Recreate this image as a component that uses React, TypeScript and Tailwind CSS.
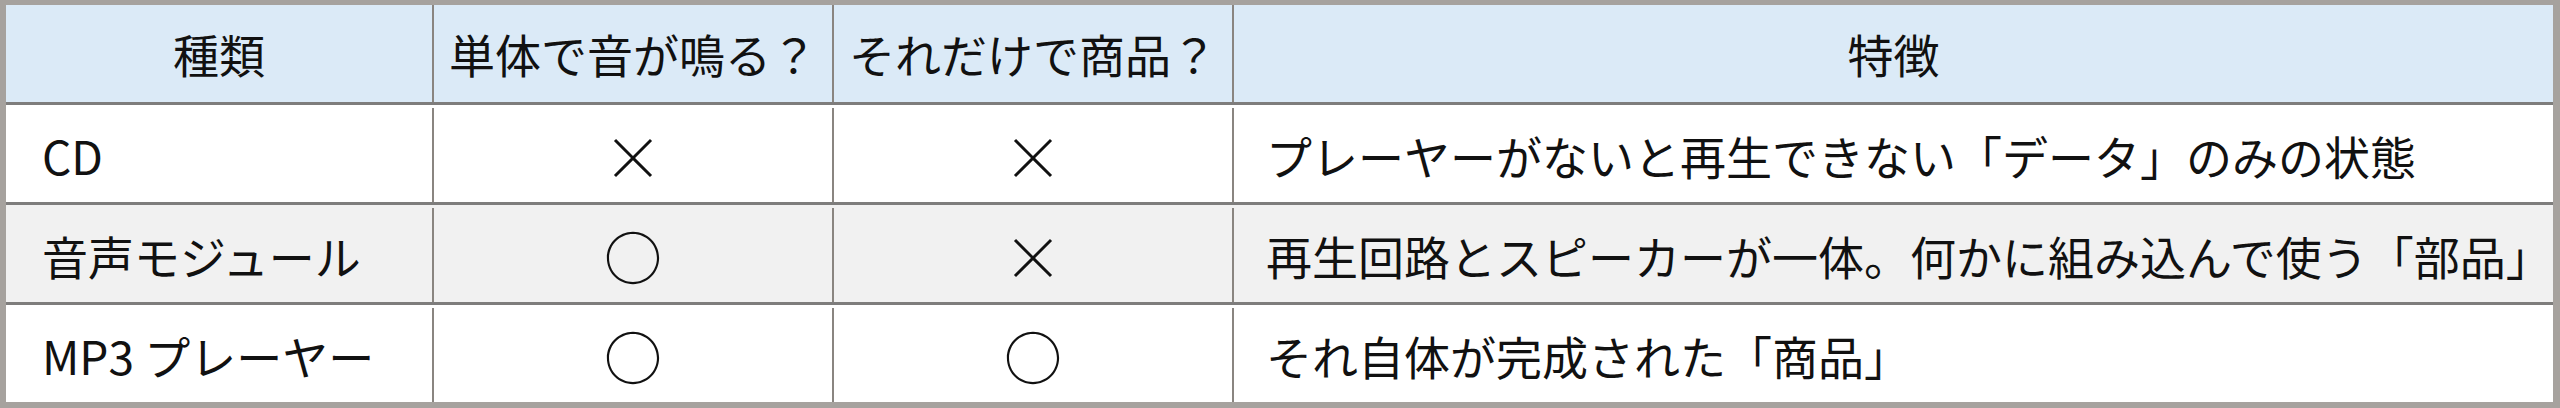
import React from "react";

type Row = {
  name: string;
  sound: string;
  product: string;
  note: string;
  shaded?: boolean;
};

const rows: Row[] = [
  { name: "CD", sound: "×", product: "×", note: "プレーヤーがないと再生できない「データ」のみの状態" },
  {
    name: "音声モジュール",
    sound: "○",
    product: "×",
    note: "再生回路とスピーカーが一体。何かに組み込んで使う「部品」",
    shaded: true,
  },
  { name: "MP3 プレーヤー", sound: "○", product: "○", note: "それ自体が完成された「商品」" },
];

const Mark = ({ value }: { value: string }) => (
  <span className={value === "○" ? "text-[58px] leading-none" : "text-[60px] leading-none font-light"}>{value}</span>
);

export default function App() {
  return (
    <div
      className="w-[2560px] h-[408px] bg-[#a6a29e] pt-[5px] pb-[6px] pl-[6px] pr-[7px] text-[#111] text-[46px]"
      style={{ fontFamily: '"Noto Sans CJK JP", "Noto Sans", sans-serif' }}
    >
      {/* Header */}
      <div className="flex h-[97px] bg-[#dbeaf7]">
        <div className="w-[426px] flex items-center justify-center">種類</div>
        <div className="w-[400px] border-l-2 border-[#8a8580] flex items-center justify-center">単体で音が鳴る？</div>
        <div className="w-[400px] border-l-2 border-[#8a8580] flex items-center justify-center">それだけで商品？</div>
        <div className="flex-1 border-l-2 border-[#8a8580] flex items-center justify-center">特徴</div>
      </div>

      {/* Body rows */}
      {rows.map((row) => (
        <div
          key={row.name}
          className={`flex h-[100px] border-t-[3px] border-[#7e7d7c] pt-[3px] ${row.shaded ? "bg-[#f1f1f1]" : "bg-white"}`}
        >
          <div className="w-[426px] flex items-center pl-[36px]">{row.name}</div>
          <div className="w-[400px] border-l-2 border-[#8a8580] flex items-center justify-center">
            <Mark value={row.sound} />
          </div>
          <div className="w-[400px] border-l-2 border-[#8a8580] flex items-center justify-center">
            <Mark value={row.product} />
          </div>
          <div className="flex-1 border-l-2 border-[#8a8580] flex items-center pl-[32px] whitespace-nowrap">
            {row.note}
          </div>
        </div>
      ))}
    </div>
  );
}
